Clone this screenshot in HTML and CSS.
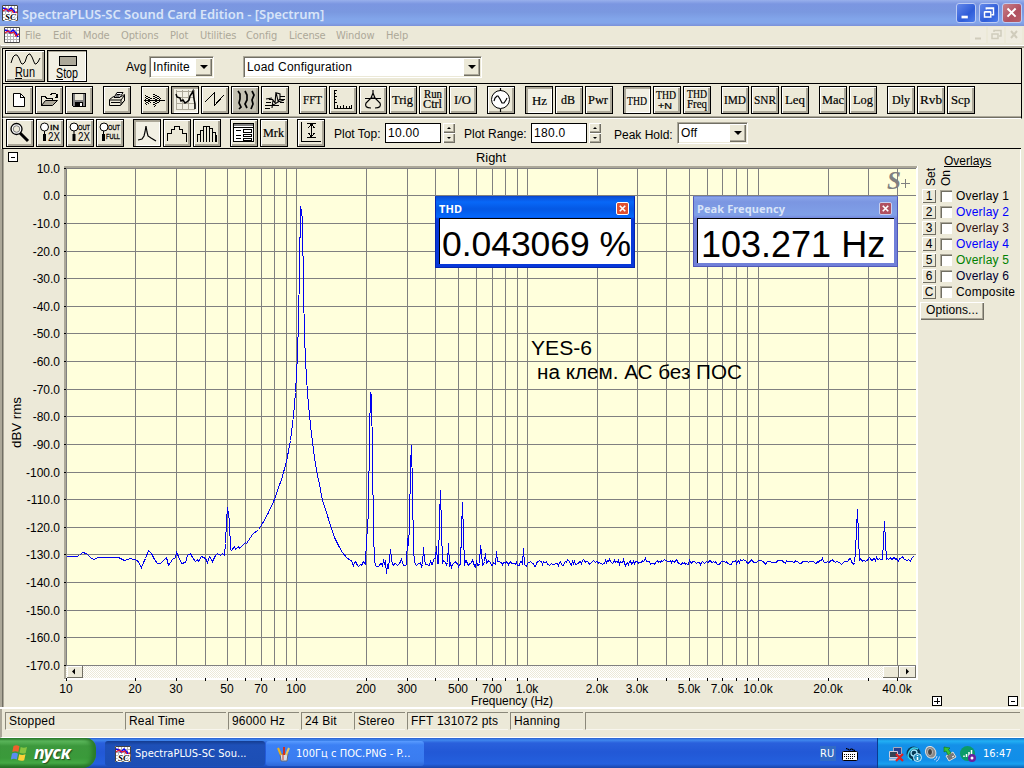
FILE: index.html
```html
<!DOCTYPE html>
<html lang="ru">
<head>
<meta charset="utf-8">
<title>SpectraPLUS-SC Sound Card Edition</title>
<link rel="stylesheet" href="styles.css">
</head>
<body>
<svg width="0" height="0" class="defs">
  <defs>
    <symbol id="app" viewBox="0 0 16 16">
      <rect width="16" height="16" fill="#fff"/>
      <path d="M3.500 0v16M6.500 0v16M9.500 0v16M12.500 0v16M0 3.500h16M0 6.500h16M0 9.500h16M0 12.500h16" stroke="#b4b4b4" fill="none"/>
      <path d="M.5.5h15v15H.5z" stroke="#444" fill="none"/>
      <path d="M1 3l3 1 2 2 3-3 3 3 2 4" stroke="#00f" stroke-width="1.500" fill="none"/>
      <path d="M1 6l3-2 3 2 3-1 2 4 3-2" stroke="#e01030" stroke-width="1.300" fill="none"/>
    </symbol>
  </defs>
</svg>

<header class="title">
  <svg class="ico16" viewBox="0 0 16 16"><use href="#app"/><text x="3" y="15" class="sc">SC</text></svg>
  <h1>SpectraPLUS-SC Sound Card Edition - [Spectrum]</h1>
  <div class="caption">
    <span class="cap"><svg viewBox="0 0 20 20"><path d="M5 14.500h7" stroke-width="3"/></svg></span>
    <span class="cap"><svg viewBox="0 0 20 20"><path d="M7 6V4.500h8V12h-2M5 9h7v5.500H5zM5 8.500h7M7 5h8"/></svg></span>
    <span class="cap close"><svg viewBox="0 0 20 20"><path d="M5 5l9 9M14 5l-9 9" stroke-width="2.200"/></svg></span>
  </div>
</header>

<nav class="menu">
  <svg class="ico16" viewBox="0 0 16 16"><use href="#app"/></svg>
  <div class="items"><span>File</span><span>Edit</span><span>Mode</span><span>Options</span><span>Plot</span><span>Utilities</span><span>Config</span><span>License</span><span>Window</span><span>Help</span></div>
  <div class="mdi">
    <svg viewBox="0 0 16 16"><path d="M5 11.500h6" stroke-width="2"/></svg>
    <svg viewBox="0 0 16 16"><path d="M6 5V3.500h7V9h-2M4 7h6v4.500H4z"/></svg>
    <svg viewBox="0 0 16 16"><path d="M5 4l6 7M11 4l-6 7" stroke-width="2"/></svg>
  </div>
</nav>

<div class="bars">
  <div class="bar bar1">
    <div class="big"><svg viewBox="0 0 40 32"><path d="M6 13l2-6 2-2h2l2 3 2 5 1 1h1l2-2 2-6 2-2h1l2 3 2 5 1 2h1l2-2 2-4" class="ln"/><text x="10" y="27" textLength="20">Run</text><path d="M10 28.500h7" class="px"/></svg></div>
    <div class="big on"><svg viewBox="0 0 40 32"><path d="M12.500 6.500h17v9h-17z" fill="#aca899" stroke="#000" shape-rendering="crispEdges"/><text x="9" y="28" textLength="22">Stop</text><path d="M9 29.500h7" class="px"/></svg></div>
    <span class="lbl avg">Avg</span>
    <div class="sel s-avg"><span>Infinite</span><i></i></div>
    <div class="sel s-load"><span>Load Configuration</span><i></i></div>
  </div>

  <div class="bar bar2">
    <div class="grp">
      <div class="btn"><svg viewBox="0 0 28 28"><path d="M8.500 7.500h7l4 4v9h-11z" fill="#fff" stroke="#000"/><path d="M15.500 7.500v4h4" class="px"/></svg></div>
      <div class="btn"><svg viewBox="0 0 28 28"><path d="M6.500 19.500v-9h4l1 2h6v3M15 9l3-2 3 1 1 3M22.500 8v3h-3" class="px"/><path d="M6.500 19.500l4-5h12l-5 5z" fill="#aca899" stroke="#000"/></svg></div>
      <div class="btn"><svg viewBox="0 0 28 28" shape-rendering="crispEdges"><path d="M7.500 7.500h13v13h-12l-1-1z" fill="#808080" stroke="#000"/><path d="M10 8h8v6h-8z" fill="#ece9d8"/><path d="M10 16h8v5h-8z" fill="#000"/><path d="M15 17h2v3h-2z" fill="#fff"/></svg></div>
    </div>
    <div class="grp">
      <div class="btn"><svg viewBox="0 0 28 28"><path d="M6.500 13.500l4-3h8l3-2v6l-4 5h-11z" fill="#ece9d8" stroke="#000"/><path d="M11 11.500l3-5h6l-3 5z" fill="#fff" stroke="#000"/><path d="M7 14h11l3-4M18 14v5M8 16.500h9M13.500 8.500h4M12.500 10h4M19 17l3-3" class="ln"/></svg></div>
    </div>
    <div class="grp">
      <div class="btn"><svg viewBox="0 0 28 28"><path d="M4.500 9v10M6.500 10v8M8.500 11v6M10.500 12v4M13.500 8v13M15.500 9v10M17.500 10v8M19.500 12v4" class="px" stroke-dasharray="1 1"/><path d="M5.500 10v9M7.500 11v7M9.500 12v5M12.500 8v12M14.500 9v11M16.500 10v8M18.500 11v6" class="px" stroke-dasharray="1 1"/><path d="M3 14.500h21" class="px"/></svg></div>
      <div class="btn on"><svg viewBox="0 0 28 28"><path d="M5.500 4v19M11.500 4v19M17.500 4v19M23.500 4v19M5 5.500h19M5 11.500h19M5 17.500h19M5 23.500h19" stroke="#aca899" fill="none"/><path d="M5 8l1 3 3 1 1 3 2-1 2 3 2-1 2-2 1-4 2-3 1-2 1 8 1 5v5" class="ln" stroke-width="1.500"/></svg></div>
      <div class="btn"><svg viewBox="0 0 28 28"><path d="M4 16l9-9v13L23 9" class="px"/></svg></div>
      <div class="btn water"><svg viewBox="0 0 28 28"><path d="M7 5l2 3v5l-1 4 2 4-2 2M14 5l2 4v5l-2 4 2 4M21 5l2 4-2 5 1 4-2 5" class="ln" stroke-width="1.700"/></svg></div>
      <div class="btn"><svg viewBox="0 0 28 28"><path d="M4 22.500h5M4 19.500h14M5 16.500h5M8 13.500h4M11 22l1-8 2 3 1-11 2 9 2-2M16 7l3 1v5M19 10.500h5M18 13.500h6M19 16.500h4M12 19l5-3 6-2M5 13l6-1" class="ln" stroke-width="1.100"/></svg></div>
    </div>
    <div class="grp">
      <div class="btn"><svg viewBox="0 0 28 28"><text x="4" y="18" textLength="19">FFT</text></svg></div>
      <div class="btn"><svg viewBox="0 0 28 28"><path d="M5.500 4v18M5 22.500h18M5 4.500h3M5 7.500h2M5 10.500h3M5 13.500h2M5 16.500h3M8.500 19v3M11.500 20v2M14.500 19v3M17.500 20v2M20.500 20v2M22.500 19v3" class="px"/></svg></div>
      <div class="btn"><svg viewBox="0 0 28 28"><path d="M14 4v4M12 12l2-5 2 5zM6 12.500h16M12 12l-5 5q-2 5 5 5M16 12l5 5q2 5-5 5" class="ln" stroke-width="1.200"/></svg></div>
      <div class="btn"><svg viewBox="0 0 28 28"><text x="3" y="18" textLength="21">Trig</text></svg></div>
      <div class="btn"><svg viewBox="0 0 28 28" class="two"><text x="5" y="12" textLength="18">Run</text><text x="4" y="22" textLength="19">Ctrl</text></svg></div>
      <div class="btn"><svg viewBox="0 0 28 28"><text x="5" y="18" textLength="17">I/O</text></svg></div>
    </div>
    <div class="grp">
      <div class="btn"><svg viewBox="0 0 28 28"><circle cx="13.500" cy="13.500" r="9" fill="#fff" stroke="#000"/><path d="M13.500 2v3M13.500 23v3M7 15l1-3 2-2h1l2 3 2 4h2l2-3 1-2" class="ln" stroke-width="1.200"/></svg></div>
    </div>
    <div class="grp">
      <div class="btn on"><svg viewBox="0 0 28 28"><text x="7" y="19" textLength="15">Hz</text></svg></div>
      <div class="btn"><svg viewBox="0 0 28 28"><text x="6" y="18" textLength="14">dB</text></svg></div>
      <div class="btn"><svg viewBox="0 0 28 28"><text x="3" y="18" textLength="20">Pwr</text></svg></div>
    </div>
    <div class="grp">
      <div class="btn on"><svg viewBox="0 0 28 28"><text x="4" y="19" textLength="20">THD</text></svg></div>
      <div class="btn"><svg viewBox="0 0 28 28" class="two"><text x="3" y="13" textLength="20">THD</text><text x="5" y="23" textLength="14" class="sans">+N</text></svg></div>
      <div class="btn"><svg viewBox="0 0 28 28" class="two"><text x="4" y="12" textLength="20">THD</text><text x="4" y="22" textLength="20">Freq</text></svg></div>
    </div>
    <div class="grp">
      <div class="btn"><svg viewBox="0 0 28 28"><text x="3" y="18" textLength="22">IMD</text></svg></div>
      <div class="btn"><svg viewBox="0 0 28 28"><text x="3" y="18" textLength="22">SNR</text></svg></div>
      <div class="btn"><svg viewBox="0 0 28 28"><text x="4" y="18" textLength="20">Leq</text></svg></div>
    </div>
    <div class="grp">
      <div class="btn"><svg viewBox="0 0 28 28"><text x="3" y="18" textLength="22">Mac</text></svg></div>
      <div class="btn"><svg viewBox="0 0 28 28"><text x="4" y="18" textLength="20">Log</text></svg></div>
    </div>
    <div class="grp">
      <div class="btn"><svg viewBox="0 0 28 28"><text x="5" y="18" textLength="18">Dly</text></svg></div>
      <div class="btn"><svg viewBox="0 0 28 28"><text x="3" y="18" textLength="22">Rvb</text></svg></div>
      <div class="btn"><svg viewBox="0 0 28 28"><text x="4" y="18" textLength="19">Scp</text></svg></div>
    </div>
  </div>

  <div class="bar bar3">
    <div class="grp">
      <div class="btn"><svg viewBox="0 0 28 28"><circle cx="10.500" cy="10" r="5.500" fill="#fff" stroke="#000" stroke-width="1.300"/><circle cx="10.500" cy="10" r="3.300" fill="#ece9d8" stroke="#777"/><path d="M14 14l8 8" stroke="#000" stroke-width="3"/></svg></div>
      <div class="btn zm"><svg viewBox="0 0 28 28"><circle cx="8.500" cy="8" r="4" class="lens"/><path d="M8.500 12v3" class="ln"/><path d="M8.500 15v7" stroke="#000" stroke-width="3"/><text x="14" y="11" textLength="9" class="s">IN</text><text x="12" y="22" textLength="12" class="l">2X</text></svg></div>
      <div class="btn zm"><svg viewBox="0 0 28 28"><circle cx="8" cy="8" r="4" class="lens"/><path d="M8 12v3" class="ln"/><path d="M8 15v7" stroke="#000" stroke-width="3"/><text x="12" y="11" textLength="12" class="s">OUT</text><text x="12" y="22" textLength="12" class="l">2X</text></svg></div>
      <div class="btn zm"><svg viewBox="0 0 28 28"><circle cx="8" cy="8" r="4" class="lens"/><path d="M7.500 12v3" class="ln"/><path d="M7.500 15v7" stroke="#000" stroke-width="3"/><text x="12" y="11" textLength="12" class="s">OUT</text><text x="10" y="20" textLength="14" class="s">FULL</text></svg></div>
    </div>
    <div class="grp">
      <div class="btn on"><svg viewBox="0 0 28 28"><path d="M5 21l4-1 2-3 1-4 1-6 1 6 1 4 3 2 5 3" class="ln" stroke-width="1.200"/></svg></div>
      <div class="btn"><svg viewBox="0 0 28 28"><path d="M4.500 22v-8h4v-4h3v-3h5v3h3v4h4v9" class="px"/></svg></div>
      <div class="btn"><svg viewBox="0 0 28 28"><path d="M4.500 23v-8h3v8M7.500 15v-4h3v12M10.500 11v-4h3v16M13.500 7h3v16M16.500 9h3v14M19.500 13h3v10M22.500 16h1v7" class="px"/></svg></div>
    </div>
    <div class="grp">
      <div class="btn"><svg viewBox="0 0 28 28" shape-rendering="crispEdges"><path d="M3.500 4.500h20v18h-20z" fill="#fff" stroke="#000"/><path d="M4 5h19v2H4z" fill="#808080"/><path d="M3 8.500h21M6 11.500h5M6 16.500h5M6 19.500h5M13.500 10.500h8v3h-8zM13.500 15.500h8v2h-8zM13.500 19.500h8v2h-8z" class="px"/></svg></div>
      <div class="btn"><svg viewBox="0 0 28 28"><text x="3" y="18" textLength="21">Mrk</text></svg></div>
    </div>
    <div class="grp">
      <div class="btn"><svg viewBox="0 0 28 28"><path d="M4.500 3v20M4 22.500h20M10 4.500h9M10 18.500h9M14.500 5v13M14.500 5l-3 4M14.500 5l3 4M14.500 18l-3-4M14.500 18l3-4" class="px"/></svg></div>
    </div>
    <span class="lbl l-top">Plot Top:</span><div class="inp">10.00</div><div class="spin"><i></i><i></i></div>
    <span class="lbl l-range">Plot Range:</span><div class="inp">180.0</div><div class="spin"><i></i><i></i></div>
    <span class="lbl l-hold">Peak Hold:</span><div class="sel s-hold"><span>Off</span><i></i></div>
  </div>
</div>

<main class="view">
  <svg id="chart" class="chart" width="916" height="558" viewBox="4 149 916 558"></svg>
  <aside class="overlays">
    <div class="ov-title">Overlays</div>
    <div class="ov-head"><span>Set</span><span>On</span></div>
    <div class="ov-row"><b>1</b><i></i><span>Overlay 1</span></div>
    <div class="ov-row blue"><b>2</b><i></i><span>Overlay 2</span></div>
    <div class="ov-row maroon"><b>3</b><i></i><span>Overlay 3</span></div>
    <div class="ov-row blue"><b>4</b><i></i><span>Overlay 4</span></div>
    <div class="ov-row green"><b>5</b><i></i><span>Overlay 5</span></div>
    <div class="ov-row navy"><b>6</b><i></i><span>Overlay 6</span></div>
    <div class="ov-row"><b>C</b><i></i><span>Composite</span></div>
    <div class="ov-opt">Options...</div>
    <div class="ov-foot"><span class="pm plus"></span><span class="pm"></span></div>
  </aside>

  <section class="win thd">
    <div class="win-t"><span>THD</span><em><svg viewBox="0 0 12 12"><path d="M3 3l6 6M9 3L3 9"/></svg></em></div>
    <div class="win-b">0.043069 %</div>
  </section>
  <section class="win peak">
    <div class="win-t"><span>Peak Frequency</span><em><svg viewBox="0 0 12 12"><path d="M3 3l6 6M9 3L3 9"/></svg></em></div>
    <div class="win-b">103.271 Hz</div>
  </section>
</main>

<footer class="status">
  <span>Stopped</span><span>Real Time</span><span>96000 Hz</span><span>24 Bit</span><span>Stereo</span><span>FFT 131072 pts</span><span>Hanning</span><span></span>
</footer>

<div class="taskbar">
  <div class="start">
    <svg viewBox="0 0 18 18" width="18" height="18"><path d="M2.500 2q3-1.500 6 .2L7.300 8q-3-1.500-6 0z" fill="#f0602c"/><path d="M9.700 3q3 1.400 6.300 0l-1.300 6q-3 1.200-6.200-.3z" fill="#86c440"/><path d="M1 9.500q3-1.500 6 .2L5.800 15.500q-3-1.500-6 0z" fill="#5a8df0"/><path d="M8.200 10.300q3 1.400 6.300 0l-1.300 6q-3 1.200-6.200-.3z" fill="#fbd038"/></svg>
    <span>пуск</span>
  </div>
  <div class="task active"><svg class="ico16" viewBox="0 0 16 16"><use href="#app"/><text x="3" y="15" class="sc">SC</text></svg><span>SpectraPLUS-SC Sou...</span></div>
  <div class="task"><svg class="ico16" viewBox="0 0 16 16"><path d="M4 8h8l-1 7H5z" fill="#d8dce4" stroke="#667"/><path d="M5 9L2 2" stroke="#e8b020" stroke-width="2"/><path d="M8 9V1" stroke="#d03020" stroke-width="2"/><path d="M10 9l3-7" stroke="#e8c860" stroke-width="2"/><path d="M7 14V8" stroke="#d04020"/></svg><span>100Гц с ПОС.PNG - P...</span></div>
  <div class="lang">RU</div>
  <svg class="kbd" viewBox="0 0 16 14" width="16" height="14"><path d="M4.500 1v1h2v1h2v-1h2v1h2v1" stroke="#000" fill="none"/><rect x=".5" y="4.500" width="15" height="9" rx="1" fill="#fff" stroke="#000"/><path d="M2 7.500h12M2 9.500h12M4 11.500h8" stroke="#000" stroke-dasharray="1 1"/></svg>
  <div class="tray">
    <svg viewBox="0 0 16 16"><path d="M5.500 1.500h8v7h-8z" fill="#26418f" stroke="#aab"/><path d="M1.500 5.500h8v6h-8z" fill="#345" stroke="#ccd"/><path d="M1 13.500h9" stroke="#ccd" stroke-width="2"/><path d="M8 8l7 7M15 8l-7 7" stroke="#e02020" stroke-width="2.200"/></svg>
    <svg viewBox="0 0 16 16"><circle cx="7.500" cy="7.500" r="7" fill="#063a55"/><path d="M12 3Q6 0 3 6t3 8" stroke="#39d2f0" stroke-width="1.500" fill="none"/><circle cx="8" cy="7" r="3" fill="none" stroke="#9fe8ff" stroke-width="1.300"/><circle cx="11.500" cy="11.500" r="4" fill="#2090c0" stroke="#cef"/><path d="M11.500 9v1M11.500 11v3" stroke="#fff" stroke-width="1.500"/></svg>
    <svg viewBox="0 0 16 16"><ellipse cx="6.500" cy="6.500" rx="5" ry="6" fill="#888" stroke="#ddd" transform="rotate(-25 6 6)"/><ellipse cx="6" cy="6" rx="2.500" ry="3.500" fill="#444" stroke="#bbb"/><path d="M10 14q3-1 3-4M12 15.500q3-1 3.500-5" stroke="#b8d0ff" fill="none"/></svg>
    <svg viewBox="0 0 16 16"><path d="M4 10l7-4 3 5-7 4z" fill="#777" stroke="#ddd"/><path d="M10 11l2-1" stroke="#fff"/><path d="M2 1l6 1-1.500 1.500L9 7 6 9 4 5 2 6z" fill="#36c236" stroke="#107010" stroke-width=".6"/></svg>
    <svg viewBox="0 0 16 16"><circle cx="7.500" cy="7.500" r="7.500" fill="#0a9b68"/><path d="M4 11V9.500M6.500 11V8M9 11V6M11.500 9V4" stroke="#fff" stroke-width="1.500"/><circle cx="12" cy="12" r="4" fill="#6a20a0"/><circle cx="12" cy="12" r="1.500" fill="#fff"/></svg>
    <span>16:47</span>
  </div>
</div>
<script src="chart.js"></script>
</body>
</html>
```

FILE: styles.css
```css
* { box-sizing: border-box; }
body { margin: 0; width: 1024px; height: 768px; overflow: hidden; display: flex; flex-direction: column; background: #ece9d8; font: 12px "Liberation Sans", Arial, sans-serif; color: #000; }
.defs { position: absolute; }
svg { display: block; }
.ico16 { width: 16px; height: 16px; flex: none; }
.sc { font: italic bold 9px "Liberation Serif", serif; stroke: #fff; stroke-width: 2px; paint-order: stroke; }

.title { height: 26px; flex: none; display: flex; align-items: center; padding: 0 2px; background: linear-gradient(#98b0ec 0, #7b96e1 4px, #7a98e0 12px, #82a5ea 19px, #82a5ea 23px, #7b90d8 26px); }
.title h1 { margin: 1px 0 0 4px; width: 304px; font: 600 13px "Noto Sans", sans-serif; letter-spacing: -.03px; white-space: nowrap; color: #d8e4f8; }
.caption { margin-left: auto; display: flex; gap: 3px; }
.cap { width: 20px; height: 20px; border: 1px solid #bccbf4; border-radius: 3px; background: linear-gradient(135deg, #6488ea, #2e5cd8 60%, #4a7cec); }
.cap svg { width: 18px; height: 18px; fill: none; stroke: #fff; stroke-width: 1.600; }
.cap.close { background: linear-gradient(135deg, #c88088, #b05060 60%, #b86068); }

.menu { height: 19px; flex: none; display: flex; padding: 0 2px 0 4px; font: 11px "DejaVu Sans Condensed", "DejaVu Sans", sans-serif; color: #aca899; }
.menu .ico16 { margin-top: 1px; }
.items { margin-left: 5px; display: grid; grid-template-columns: 28px 30px 38px 49px 30px 46px 43px 47px 50px 40px; line-height: 19px; letter-spacing: -.1px; white-space: nowrap; }
.mdi { margin-left: auto; display: flex; gap: 2px; }
.mdi svg { width: 16px; height: 16px; margin-top: 1px; fill: none; stroke: #d0ccbc; stroke-width: 1.500; background: #efece0; }

.bars { flex: none; border-top: 1px solid #fff; box-shadow: inset 0 2px #aca899; padding: 2px 2px 0 1px; border-left: 1px solid #aca899; }
.bar { display: flex; align-items: flex-start; border: 0 solid #000; border-left-width: 1px; }
.bar1 { height: 36px; border-width: 1px; padding: 1px 0 0 2px; }
.bar2 { height: 35px; gap: 10px; padding: 2px 0 0 2px; border-right-width: 1px; border-bottom: 1px solid #fff; box-shadow: inset 0 -1px #716f64, inset 0 -2px #aca899; }
.bar3 { height: 30px; gap: 9px; padding-left: 3px; margin-right: 1px; border-bottom-width: 1px; }
.grp { display: flex; gap: 2px; }
.btn, .big { position: relative; flex: none; width: 28px; height: 28px; border: 1px solid #000; box-shadow: inset 1px 1px #fff, inset -1px -1px #aca899, inset -2px -2px #aca899; }
.btn.on, .big.on { box-shadow: inset 1px 1px #aca899, inset -1px -1px #fff; background: #f2f0e4; }
.btn.on { box-shadow: inset 2px 2px #aca899, inset -1px -1px #fff; }
.btn svg, .big svg { margin: -1px; width: 28px; height: 28px; overflow: visible; }
.big { width: 40px; height: 32px; margin-right: 2px; }
.big svg { width: 40px; height: 32px; font: 14px "Liberation Sans", sans-serif; }
.btn text { font: 13px "Liberation Serif", serif; stroke: #000; stroke-width: .2px; }
.btn .two text { font-size: 11.500px; }
.btn .two .sans { font: 9px "Liberation Sans", sans-serif; }
.zm svg .s { font: 7.500px "Liberation Sans", sans-serif; stroke-width: .3px; }
.zm svg .l { font: 12px "Liberation Sans", sans-serif; stroke: none; }
.lens { fill: #fff; stroke: #000; }
.px { fill: none; stroke: #000; shape-rendering: crispEdges; }
.ln { fill: none; stroke: #000; }
.water { background: #c4c1b2; }

.lbl { white-space: nowrap; flex: none; }
.avg { margin: 10px 0 0 37px; width: 23px; }
.sel { flex: none; height: 22px; display: flex; background: #fff; border: 1px solid #fff; border-top-color: #aca899; border-left-color: #aca899; box-shadow: inset 1px 1px #716f64, inset -1px -1px #ece9d8; line-height: 21px; }
.sel span { flex: 1; padding-left: 3px; letter-spacing: .2px; }
.sel i, .spin i { display: flex; align-items: center; justify-content: center; background: #ece9d8; box-shadow: inset 1px 1px #fff, inset -1px -1px #716f64, inset -2px -2px #aca899; }
.sel i { width: 17px; margin: 1px; }
.sel i::after { content: ""; border: 4px solid transparent; border-top-color: #000; border-bottom: 0; }
.s-avg { width: 65px; margin: 6px 0 0; }
.s-load { width: 239px; margin: 6px 0 0 29px; }
.l-top { width: 50px; margin: 8px -8px 0 0; }
.l-range { width: 66px; margin: 8px -8px 0 0; }
.l-hold { width: 62px; margin: 9px -8px 0 4px; }
.inp { flex: none; width: 56px; height: 20px; margin-top: 4px; border: 1px solid #000; background: #fff; padding-left: 2px; line-height: 18px; letter-spacing: .3px; }
.spin { flex: none; width: 12px; height: 20px; margin: 4px 0 0 -7px; }
.spin i { height: 10px; }
.spin i::after { content: ""; border: 2px solid transparent; border-bottom-color: #000; border-top: 0; }
.spin i + i::after { border: 2px solid transparent; border-top-color: #000; border-bottom: 0; }
.s-hold { width: 71px; margin: 3px 0 0 0; }

.view { position: relative; height: 560px; flex: none; display: flex; border-bottom: 2px solid #fff; box-shadow: inset 2px 0 #aca899, inset 3px 0 #716f64, inset 4px 0 #aca899; padding-left: 4px; }
.chart { flex: none; overflow: visible; }
.chart text { font: 12px "Liberation Sans", Arial, sans-serif; }
.chart .num { text-anchor: end; }
.chart .mid { text-anchor: middle; }
.chart .note { font-size: 20px; }
.chart .logo { font: italic bold 25px "Liberation Serif", serif; fill: #808080; }
.overlays { width: 101px; border-right: 1px solid #fff; display: flex; flex-direction: column; }
.ov-title { margin: 5px 0 0 24px; height: 14px; line-height: 14px; text-decoration: underline; }
.ov-head { display: flex; height: 20px; padding: 0 0 2px 4px; align-items: flex-end; }
.ov-head span { writing-mode: vertical-rl; transform: rotate(180deg); width: 15px; line-height: 15px; height: 20px; white-space: nowrap; }
.ov-row { height: 16px; display: flex; align-items: center; white-space: nowrap; }
.ov-row b { font-weight: normal; color: #000; width: 14px; height: 14px; line-height: 14px; text-align: center; margin-left: 2px; box-shadow: inset 1px 1px #fff, inset -1px -1px #716f64; }
.ov-row i { width: 12px; height: 12px; margin: 0 4px 0 4px; background: #fff; box-shadow: inset 1px 1px #aca899, inset 2px 2px #716f64; }
.ov-row span { letter-spacing: .2px; line-height: 16px; }
.blue { color: #00f; } .maroon { color: #301010; } .green { color: #008000; } .navy { color: #000030; }
.ov-opt { width: 64px; height: 18px; margin-top: 2px; line-height: 17px; padding-left: 6px; letter-spacing: .1px; box-shadow: inset 1px 1px #fff, inset -1px -1px #716f64, inset -2px -2px #aca899; }
.ov-foot { margin-top: auto; padding: 0 2px 1px 12px; display: flex; justify-content: space-between; }
.pm { width: 10px; height: 10px; border: 1px solid #000; background: linear-gradient(#000, #000) center / 4px 1px no-repeat #fff; }
.plus { background: linear-gradient(#000, #000) center / 6px 1px no-repeat, linear-gradient(#000, #000) center / 1px 6px no-repeat #fff; }

.win { position: absolute; top: 47px; display: flex; flex-direction: column; padding: 0 3px 3px; }
.thd { left: 435px; width: 200px; height: 72px; background: linear-gradient(#0a50d8, #0868f8 5px, #0458e4 12px, #0468fc 20px, #0838d8 22px, #0838d8); border: 1px solid #0624b0; border-top-color: #0848d0; }
.peak { left: 693px; width: 205px; height: 71px; background: linear-gradient(#8aa4ea, #7b96e1 5px, #80a0e8 18px, #7080d8 22px, #7080d8); border: 1px solid #5058b8; border-top-color: #7088d8; }
.win-t { height: 21px; flex: none; display: flex; align-items: center; justify-content: space-between; font: bold 11px "Noto Sans", sans-serif; color: #fff; padding: 2px 2px 0 0; letter-spacing: .1px; }
.peak .win-t { color: #d8e4f8; }
.win-t em { width: 13px; height: 13px; border: 1px solid #fff; border-radius: 2px; background: #e05030; }
.win-t svg { fill: none; stroke: #fff; stroke-width: 1.800; }
.peak em { background: #b05060; border-color: #c8d0f0; }
.win-b { flex: 1; background: #fff; border: 1px solid #000; border-right: 0; border-bottom: 0; font-size: 36px; line-height: 51px; padding-left: 2px; white-space: nowrap; overflow: hidden; }
.thd .win-b { font-size: 35.500px; letter-spacing: -.05px; }
.peak .win-b { padding-left: 3px; }

.status { height: 29px; flex: none; display: grid; grid-template-columns: 118px 101px 71px 51px 51px 101px 73px 1fr; gap: 2px; padding: 3px 4px 8px 3px; border-left: 2px solid #aca899; border-bottom: 1px solid #fff; }
.status span { height: 18px; border-left: 1px solid #8b887a; border-top: 1px solid #8b887a; border-bottom: 1px solid #f8f6ee; padding-left: 3px; line-height: 17px; letter-spacing: .2px; white-space: nowrap; }

.taskbar { height: 30px; flex: none; display: flex; background: linear-gradient(#2a5ed0, #4088ee 2px, #2a60dc 5px, #2258d6 14px, #2460de 26px, #1a44a8); }
.start { width: 96px; display: flex; align-items: center; gap: 5px; padding-left: 11px; margin-right: 9px; border-radius: 0 10px 14px 0; background: linear-gradient(#2c7a2c, #5cb85c 3px, #3c983c 8px, #3a9a3a 20px, #44a844 25px, #206820); box-shadow: inset -4px 0 4px #2a7a2a; }
.start span { font: italic bold 18px "Noto Sans", sans-serif; letter-spacing: -.2px; line-height: 26px; padding-bottom: 3px; color: #fff; text-shadow: 1px 1px 1px #205020; }
.task { width: 158px; height: 25px; margin: 3px 1px 0 0; padding-left: 10px; display: flex; align-items: center; gap: 4px; border-radius: 3px; background: linear-gradient(#5a9cff, #3c80f4 4px, #3a7cf0 20px, #2e68d8); color: #fff; font: 11px "DejaVu Sans Condensed", sans-serif; letter-spacing: .05px; white-space: nowrap; }
.task.active { width: 160px; background: linear-gradient(#143c90, #1e50b8 4px, #1c4eb4); }
.lang { margin: 8px 0 0 395px; width: 16px; height: 15px; background: #316ac5; color: #fff; font: 11px/15px "DejaVu Sans Condensed", sans-serif; }
.kbd { margin: 9px 0 0 6px; }
.tray { margin-left: auto; width: 147px; display: flex; align-items: center; gap: 2px; padding: 1px 0 0 10px; border-left: 1px solid #0a3c90; background: linear-gradient(#1470c8, #22b0f4 3px, #1490e8 7px, #118ee8 22px, #18a0f0 26px, #0c60b0); color: #fff; font: 11px "DejaVu Sans Condensed", sans-serif; }
.tray svg { width: 16px; height: 16px; flex: none; }
.tray span { margin-left: 5px; }
```

FILE: chart.js
```javascript
(function () {
  var X0 = 66.19, DECADE = 230.79, Y0 = 168, STEP = 27.61;
  var out = '';
  function fx(f) { return Math.floor(X0 + DECADE * Math.log10(f / 10)); }
  function rect(x, y, w, h, c) { out += '<rect x="' + x + '" y="' + y + '" width="' + w + '" height="' + h + '" fill="' + c + '"/>'; }
  function text(x, y, cls, s, extra) { out += '<text x="' + x + '" y="' + y + '" class="' + cls + '" ' + (extra || '') + '>' + s + '</text>'; }

  // frame and plot surface
  out += '<defs><pattern id="dither" width="2" height="2" patternUnits="userSpaceOnUse"><rect width="2" height="2" fill="#fff"/><rect width="1" height="1" fill="#ece9d8"/><rect x="1" y="1" width="1" height="1" fill="#ece9d8"/></pattern></defs>';
  rect(64, 166, 854, 514, '#fff');
  rect(64, 166, 853, 2, '#aca899');
  rect(64, 166, 2, 513, '#aca899');
  rect(66, 168, 850, 498, '#ffffdc');
  rect(66, 666, 850, 12, 'url(#dither)');

  // grid
  var i, d, m, y, x;
  rect(66, 168, 1, 498, '#808080');
  for (i = 0; i <= 18; i++) {
    y = Math.floor(Y0 + STEP * i + 0.3);
    rect(66, y, 850, 1, '#808080');
    rect(64, y, 3, 1, '#000');
    text(60, y + 5, 'num', (10 - i * 10).toFixed(1));
  }
  for (d = 10; d <= 10000; d *= 10) {
    for (m = 1; m <= 9; m++) {
      if (d * m > 40000) break;
      x = fx(d * m);
      rect(x, 168, 1, 498, '#808080');
      rect(x, 678, 1, 3, '#000');
      if (([1, 2, 3, 5, 7].indexOf(m) >= 0 && d * m !== 30000) || d * m === 40000) {
        text(x, 693, 'mid', d < 1000 ? d * m : (d * m / 1000).toFixed(1) + 'k');
      }
    }
  }

  // scroll bar buttons
  function raised(x, w) {
    rect(x, 666, w, 12, '#716f64'); rect(x, 666, w - 1, 11, '#fff'); rect(x + 1, 667, w - 2, 10, '#ece9d8');
  }
  raised(67, 16); raised(883, 16); raised(899, 17);
  out += '<path d="M72 671.500l3-3v6zM909 671.500l-3-3v6z"/>';

  // trace: fixed points, plus small jitter over the noise floor
  var left = [66,556,76,556,79,555,82,552,86,553,90,557,93,559,98,557,112,557,118,557,124,560,130,558,137,560,141,567,143,562,145,558,148,550,151,553,154,559,157,563,160,563,163,560,166,557,168,565,172,559,175,557,176,552,178,556,181,563,185,562,187,555,190,553,192,557,195,561,197,559,198,561,201,556,205,558,207,562,209,556,212,561,215,555,217,553,220,555,222,553,224,555,225,543,226,521,227,507,228,513,229,521,230,549,231,550,234,546,235,549,238,546,239,548,245,542,246,543,252,534,258,529,262,523,268,512,274,499,278,487,281,479,286,461,290,440,293,415,295,392,297,355,298,320,299,270,300,206,301,211,302,219,303,290,304,335,305,360,307,393,310,425,313,450,316,470,319,484,322,500,326,512,330,525,334,537,338,545,342,552,346,557,350,560];
  var peaks = [366,538,367,530,368,508,369,435,370,392,371,395,372,455,373,532,374,560, 386,573,389,559,390,549,391,558, 407,538,408,545,409,525,410,465,411,445,412,488,413,549, 423,547, 436,546,439,518,440,490,441,527,442,563, 448,543, 461,531,462,502,463,534,464,565, 480,545,481,552, 485,553, 496,551, 523,548, 855,552,856,528,857,509,858,536,859,560, 883,540,884,521,885,541,886,559];
  var fixed = {};
  for (i = 0; i < peaks.length; i += 2) fixed[peaks[i]] = peaks[i + 1];
  var seed = 71, pts = [], drift = 0;
  function rnd() { seed = (seed * 16807) % 2147483647; return seed / 2147483647; }
  for (i = 0; i < left.length; i += 2) pts.push((left[i] + 0.5) + ',' + (left[i + 1] + 0.5));
  for (x = 351; x <= 913; x++) {
    var base = x < 580 ? 563 : x < 860 ? 561.5 : 559;
    var amp = x < 480 ? 5.5 : x < 660 ? 4.2 : 3.2;
    drift = drift * 0.4 + (rnd() + rnd() - 1) * amp * 0.85;
    y = fixed[x] !== undefined ? fixed[x] : Math.round(base + drift);
    pts.push((x + 0.5) + ',' + (y + 0.5));
  }
  out += '<polyline points="' + pts.join(' ') + '" fill="none" stroke="#0000f0" stroke-width="1" shape-rendering="crispEdges"/>';

  // captions and notes
  text(476, 162, '', 'Right', 'textLength="30"');
  text(471, 705, '', 'Frequency (Hz)', 'textLength="82"');
  text(0, 0, '', 'dBV rms', 'transform="translate(20.5 448) rotate(-90)" textLength="51"');
  text(531, 355, 'note', 'YES-6', 'textLength="61"');
  text(537, 379, 'note', 'на клем. АС без ПОС', 'textLength="205"');
  text(887, 189, 'logo', 'S', '');
  out += '<path d="M901 183.500h9M905.500 179v9" stroke="#808080"/>';
  out += '<rect x="8.500" y="152.500" width="9" height="9" fill="#fff" stroke="#000"/>';
  rect(11, 157, 4, 1, '#000');

  document.getElementById('chart').innerHTML = out;
  Array.prototype.forEach.call(document.querySelectorAll('text[textLength]'), function (t) {
    t.setAttribute('lengthAdjust', 'spacingAndGlyphs');
  });
})();
```
